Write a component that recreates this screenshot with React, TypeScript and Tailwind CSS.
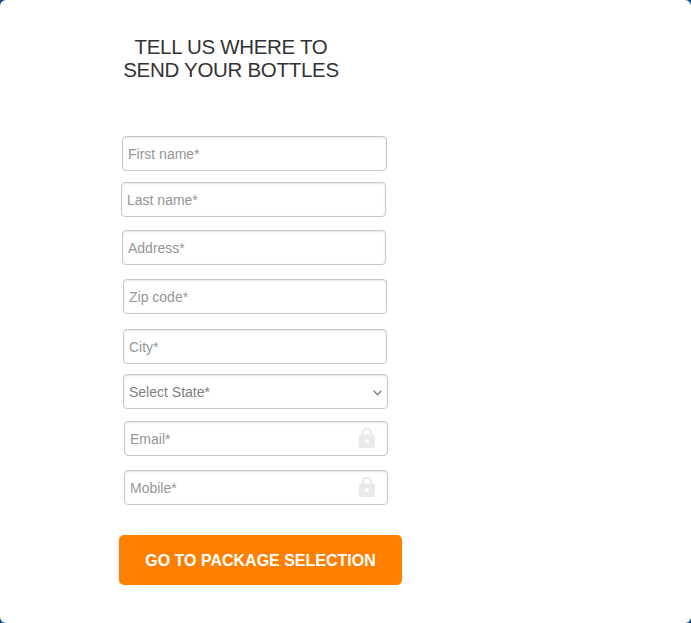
const field =
  "flex h-[35px] items-center justify-between rounded border border-[#c8c8c8] bg-white px-[5px] text-sm shadow-[inset_0_1px_2px_rgba(0,0,0,0.1)]";

function Lock() {
  return (
    <svg width="18" height="20" viewBox="0 0 18 20" className="mr-[6px] mb-px">
      <path d="M4.8 7V5a4.2 4.2 0 0 1 8.4 0v2" fill="none" stroke="#eaeaea" strokeWidth="1.9" />
      <path fillRule="evenodd" fill="#eaeaea" d="M2.500 6.500h13a1.500 1.500 0 0 1 1.500 1.500V18.500a1.500 1.500 0 0 1-1.500 1.500H2.500a1.500 1.500 0 0 1-1.500-1.500V8a1.500 1.500 0 0 1 1.500-1.500ZM9 11.200a2 2 0 1 0 0 4 2 2 0 0 0 0-4Z" />
    </svg>
  );
}

export default function App() {
  return (
    <div className="h-[623px] w-[691px] bg-[#0b4a86] font-['Liberation_Sans',Arial,sans-serif]">
      <main className="h-full rounded-[6px] bg-white pt-[35px]">
        <h1 className="ml-[111px] w-[240px] text-center text-[20.5px] leading-[23px] tracking-[-0.3px] text-[#333]">
          TELL US WHERE TO<br />SEND YOUR BOTTLES
        </h1>
        <form>
          <div className={`${field} mt-[55px] ml-[122px] w-[265px] text-[#969696]`}>First name*</div>
          <div className={`${field} mt-[11px] ml-[121px] w-[265px] text-[#969696]`}>Last name*</div>
          <div className={`${field} mt-[13px] ml-[122px] w-[264px] text-[#969696]`}>Address*</div>
          <div className={`${field} mt-[14px] ml-[123px] w-[264px] text-[#969696]`}>Zip code*</div>
          <div className={`${field} mt-[15px] ml-[123px] w-[264px] text-[#969696]`}>City*</div>
          <div className={`${field} mt-[10px] ml-[123px] w-[265px] text-[#808080]`}>
            Select State*
            <svg width="9" height="6" viewBox="0 0 9 6" fill="none" stroke="#808080" strokeWidth="1.4" className="mt-[2px]">
              <path d="m.7.8 3.800 4 3.800-4" />
            </svg>
          </div>
          <div className={`${field} mt-[12px] ml-[124px] w-[264px] text-[#969696]`}>Email*<Lock /></div>
          <div className={`${field} mt-[14px] ml-[124px] w-[264px] text-[#969696]`}>Mobile*<Lock /></div>
          <button type="button" className="mt-[30px] ml-[119px] h-[50px] w-[283px] rounded-[5px] bg-[#ff8000] pt-[2px] text-base font-bold text-white">
            GO TO PACKAGE SELECTION
          </button>
        </form>
      </main>
    </div>
  );
}
